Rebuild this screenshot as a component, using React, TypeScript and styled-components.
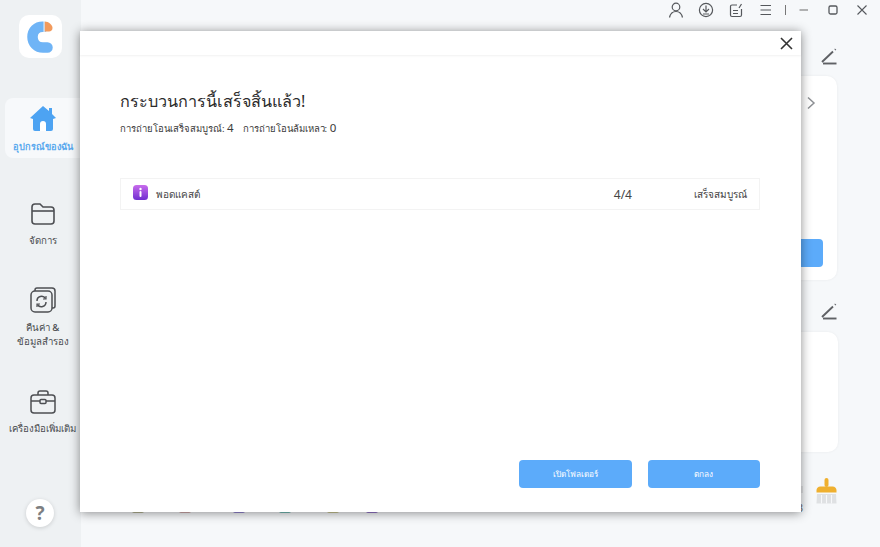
import React from 'react'
import styled, { createGlobalStyle } from 'styled-components'

const Global = createGlobalStyle`
  html, body { margin: 0; padding: 0; height: 100%; }
  body { font-family: "Noto Sans", "Liberation Sans", "DejaVu Sans", sans-serif; color: #333; overflow: hidden; }
  #root { height: 100%; }
`

const appDots = [
  { color: '#9a9a6a', gap: 0 },
  { color: '#c58b8b', gap: 47 },
  { color: '#6a55c0', gap: 54 },
  { color: '#3fa59a', gap: 46 },
  { color: '#b9b36a', gap: 48 },
  { color: '#6b3fb5', gap: 39 },
]

const App = () => {
  return (
    <Page>
      <Global />
      <Sidebar>
        <LogoTile>
          <svg width="32" height="34" viewBox="0 0 32 34">
            <path d="M18.5 6.8 C11.5 6.4 7.5 11 7.5 17 C7.5 23 12 27.5 18 27.5 H22.5" fill="none" stroke="#6fb4f6" strokeWidth="10.5" strokeLinecap="round" />
            <path d="M19.5 1.5 C24 1.5 27.5 5 27.5 8 C27.5 10 26 11.5 24 11.5 H19.5 Z" fill="#f29a5c" />
            <rect x="18.6" y="0" width="0.9" height="13" fill="#fff" />
          </svg>
        </LogoTile>
        <NavActive>
          <svg width="28" height="26" viewBox="0 0 28 26">
            <path d="M14 1 L1 13 L4 14 L4 24 A2 2 0 0 0 6 26 L22 26 A2 2 0 0 0 24 24 L24 14 L27 13 L23 9 L23 3 L20 3 L20 6 Z" fill="#4da3f2" />
            <path d="M11 26 L11 19 A3 3 0 0 1 17 19 L17 26 Z" fill="#fff" />
          </svg>
          <ActiveLabel>อุปกรณ์ของฉัน</ActiveLabel>
        </NavActive>
        <NavItem $top={44}>
          <svg width="26" height="24" viewBox="0 0 26 24" fill="none" stroke="#4d4f53" strokeWidth="1.6">
            <path d="M2 19 V5 A3 3 0 0 1 5 2 H10 L13 5 H21 A3 3 0 0 1 24 8 V19 A3 3 0 0 1 21 22 H5 A3 3 0 0 1 2 19 Z" />
            <path d="M2 9 H24" />
          </svg>
          <NavLabel>จัดการ</NavLabel>
        </NavItem>
        <NavItem $top={39}>
          <svg width="26" height="26" viewBox="0 0 26 26" fill="none" stroke="#4d4f53" strokeWidth="1.5">
            <rect x="1" y="4" width="21" height="21" rx="4" />
            <path d="M5 4 V3 A2 2 0 0 1 7 1 H22 A3 3 0 0 1 25 4 V19 A2 2 0 0 1 23 21 H22" />
            <path d="M7 14 A4.6 4.6 0 0 1 15.5 11.5 M16 15 A4.6 4.6 0 0 1 7.5 17.5" />
            <path d="M16 9 V12 H13 M7 20 V17 H10" strokeWidth="1.2" />
          </svg>
          <NavLabel>คืนค่า &<br />ข้อมูลสำรอง</NavLabel>
        </NavItem>
        <NavItem $top={41}>
          <svg width="26" height="24" viewBox="0 0 26 24" fill="none" stroke="#4d4f53" strokeWidth="1.5">
            <rect x="1" y="5" width="24" height="18" rx="3" />
            <path d="M8 5 V3 A2 2 0 0 1 10 1 H16 A2 2 0 0 1 18 3 V5" />
            <path d="M1 11 H10 M16 11 H25" />
            <rect x="10" y="9.5" width="6" height="4" rx="1" />
          </svg>
          <NavLabel>เครื่องมือเพิ่มเติม</NavLabel>
        </NavItem>
        <HelpButton>?</HelpButton>
      </Sidebar>

      <Main>
        <TitleBar>
          <BarIcon>
            <svg width="16" height="16" viewBox="0 0 16 16" fill="none" stroke="#55585c" strokeWidth="1.2">
              <circle cx="8" cy="5" r="3.8" />
              <path d="M1.5 15.5 C2.5 11 5 9.5 8 9.5 C11 9.5 13.5 11 14.5 15.5" />
            </svg>
          </BarIcon>
          <BarIcon>
            <svg width="16" height="16" viewBox="0 0 16 16" fill="none" stroke="#55585c" strokeWidth="1.2">
              <circle cx="8" cy="8" r="6.6" />
              <path d="M8 3.5 V9.5 M5 7 L8 10 L11 7 M5 12 H11" />
            </svg>
          </BarIcon>
          <BarIcon>
            <svg width="16" height="16" viewBox="0 0 16 16" fill="none" stroke="#55585c" strokeWidth="1.2">
              <path d="M9 3 H4 A1.5 1.5 0 0 0 2.5 4.5 V13 A1.5 1.5 0 0 0 4 14.5 H12 A1.5 1.5 0 0 0 13.5 13 V7" />
              <path d="M5 8.5 H10 M5 11.5 H10 M11 6 L13.5 2" />
            </svg>
          </BarIcon>
          <BarIcon>
            <svg width="16" height="16" viewBox="0 0 16 16" fill="none" stroke="#55585c" strokeWidth="1.2">
              <path d="M2.5 3.5 H13 M2.5 8 H13 M2.5 12.5 H13" />
            </svg>
          </BarIcon>
          <BarDivider />
          <WinIcon>
            <svg width="12" height="12" viewBox="0 0 12 12" fill="none" stroke="#777" strokeWidth="1.1">
              <path d="M1.5 6 H10" />
            </svg>
          </WinIcon>
          <WinIcon>
            <svg width="12" height="12" viewBox="0 0 12 12" fill="none" stroke="#55585c" strokeWidth="1.3">
              <rect x="2" y="2" width="8" height="8" rx="1.5" />
            </svg>
          </WinIcon>
          <WinIcon>
            <svg width="12" height="12" viewBox="0 0 12 12" fill="none" stroke="#55585c" strokeWidth="1.1">
              <path d="M1.5 1.5 L10.5 10.5 M10.5 1.5 L1.5 10.5" />
            </svg>
          </WinIcon>
        </TitleBar>

        <EditRow $top={28}><EditIcon /></EditRow>
        <UpperCard>
          <Chevron>
            <svg width="10" height="14" viewBox="0 0 10 14" fill="none" stroke="#8d9094" strokeWidth="1.5">
              <path d="M2 1.5 L8 7 L2 12.5" />
            </svg>
          </Chevron>
          <CardButton />
        </UpperCard>
        <EditRow $top={23}><EditIcon /></EditRow>
        <LowerCard />
        <BottomRow>
          <AppDots>
            {appDots.map((d) => (
              <AppDot key={d.color} $color={d.color} $gap={d.gap} />
            ))}
          </AppDots>
          <BottomRight>
            <StorageNote>
              <NoteBar />
              <span>3</span>
            </StorageNote>
            <svg width="21" height="26" viewBox="0 0 21 26">
              <rect x="8.5" y="0" width="4" height="9" rx="2" fill="#efb02f" />
              <path d="M0.5 13 A4 4 0 0 1 4.5 8.5 H16.5 A4 4 0 0 1 20.5 13 V14.5 H0.5 Z" fill="#efb02f" />
              <path d="M1 16 H20 L20.5 25.5 H0.5 Z" fill="#dfe1e3" />
              <path d="M5.5 17 V25.5 M10.5 17 V25.5 M15.5 17 V25.5" stroke="#f7f8fa" strokeWidth="1.1" />
            </svg>
          </BottomRight>
        </BottomRow>
      </Main>

      <Dialog>
        <DialogBar>
          <CloseButton>
            <svg width="13" height="13" viewBox="0 0 13 13" fill="none" stroke="#333" strokeWidth="1.6">
              <path d="M1 1 L12 12 M12 1 L1 12" />
            </svg>
          </CloseButton>
        </DialogBar>
        <DialogBody>
          <Title>กระบวนการนี้เสร็จสิ้นแล้ว!</Title>
          <Summary>
            <span>การถ่ายโอนเสร็จสมบูรณ์: <Num>4</Num></span>
            <span>การถ่ายโอนล้มเหลว: <Num>0</Num></span>
          </Summary>
          <ResultRow>
            <PodcastIcon>
              <svg width="15" height="15" viewBox="0 0 15 15">
                <defs>
                  <linearGradient id="pod" x1="0" y1="0" x2="0" y2="1">
                    <stop offset="0" stopColor="#c86bec" />
                    <stop offset="1" stopColor="#6f2fd0" />
                  </linearGradient>
                </defs>
                <rect width="15" height="15" rx="3.5" fill="url(#pod)" />
                <circle cx="7.5" cy="4" r="1.2" fill="#fff" />
                <rect x="6.5" y="6" width="2" height="6" rx="1" fill="#fff" />
              </svg>
            </PodcastIcon>
            <RowName>พอดแคสต์</RowName>
            <RowCount>4/4</RowCount>
            <RowStatus>เสร็จสมบูรณ์</RowStatus>
          </ResultRow>
          <DialogActions>
            <PrimaryButton>เปิดโฟลเดอร์</PrimaryButton>
            <PrimaryButton>ตกลง</PrimaryButton>
          </DialogActions>
        </DialogBody>
      </Dialog>
    </Page>
  )
}

const EditIcon = () => (
  <svg width="18" height="18" viewBox="0 0 18 18" fill="none" stroke="#5f6165" strokeWidth="1.9">
    <path d="M2 14 L13 3.5 M15 1.8 L15.6 1.2" />
    <path d="M3 15.5 H16.5" />
  </svg>
)

export default App

const Page = styled.div`
  position: relative;
  display: flex;
  width: 880px;
  height: 547px;
  overflow: hidden;
  background: #f6f8fa;
`

const Sidebar = styled.nav`
  display: flex;
  flex-direction: column;
  align-items: flex-end;
  width: 81px;
  flex-shrink: 0;
  padding-top: 15px;
  box-sizing: border-box;
  background: #eef1f3;
`

const LogoTile = styled.div`
  display: flex;
  align-items: center;
  justify-content: center;
  width: 43px;
  height: 43px;
  margin-right: 19px;
  border-radius: 10px;
  background: #fff;
`

const NavActive = styled.div`
  display: flex;
  flex-direction: column;
  align-items: center;
  width: 76px;
  height: 60px;
  margin-top: 40px;
  padding-top: 7px;
  box-sizing: border-box;
  border-radius: 8px 0 0 8px;
  background: #f7f9fb;
`

const ActiveLabel = styled.span`
  margin-top: 9px;
  font-size: 9.2px;
  font-weight: 700;
  line-height: 13px;
  color: #5aa9ee;
  white-space: nowrap;
`

const NavItem = styled.div<{ $top: number }>`
  display: flex;
  flex-direction: column;
  align-items: center;
  width: 81px;
  margin-top: ${(p) => p.$top}px;
  padding-left: 4px;
  box-sizing: border-box;
`

const NavLabel = styled.span`
  margin-top: 8px;
  font-size: 9.7px;
  font-weight: 500;
  line-height: 14px;
  color: #4a4c50;
  text-align: center;
  white-space: nowrap;
`

const HelpButton = styled.div`
  display: flex;
  align-items: center;
  justify-content: center;
  width: 28px;
  height: 28px;
  margin-top: 63px;
  margin-right: 27px;
  border-radius: 50%;
  background: #fff;
  box-shadow: 0 1px 4px rgba(0, 0, 0, 0.15);
  font-size: 19px;
  font-weight: 700;
  color: #7d7f82;
`

const Main = styled.main`
  display: flex;
  flex-direction: column;
  flex: 1;
  min-width: 0;
`

const TitleBar = styled.header`
  display: flex;
  align-items: center;
  justify-content: flex-end;
  height: 20px;
  padding-right: 4px;
`

const BarIcon = styled.span`
  display: flex;
  justify-content: center;
  width: 30px;
`

const BarDivider = styled.span`
  width: 1px;
  height: 10px;
  margin: 0 3px 0 4px;
  background: #777;
`

const WinIcon = styled.span`
  display: flex;
  justify-content: center;
  width: 29px;
`

const EditRow = styled.div<{ $top: number }>`
  display: flex;
  justify-content: flex-end;
  height: 18px;
  margin-top: ${(p) => p.$top}px;
  padding-right: 42px;
`

const UpperCard = styled.section`
  display: flex;
  flex-direction: column;
  align-items: flex-end;
  height: 204px;
  margin: 10px 43px 0 30px;
  padding: 20px 14px 13px 0;
  box-sizing: border-box;
  border-radius: 10px;
  background: #fff;
  box-shadow: 0 0 3px rgba(0, 0, 0, 0.06);
`

const Chevron = styled.span`
  display: flex;
  margin-right: 7px;
`

const CardButton = styled.span`
  width: 120px;
  height: 28px;
  margin-top: auto;
  border-radius: 4px;
  background: #5cabfa;
`

const LowerCard = styled.section`
  height: 120px;
  margin: 11px 42px 0 30px;
  border-radius: 10px;
  background: #fff;
  box-shadow: 0 0 3px rgba(0, 0, 0, 0.06);
`

const BottomRow = styled.div`
  display: flex;
  align-items: flex-start;
  justify-content: space-between;
  margin: 26px 43px 0 51px;
`

const AppDots = styled.div`
  display: flex;
  margin-top: 5px;
`

const AppDot = styled.span<{ $color: string; $gap: number }>`
  width: 12px;
  height: 30px;
  margin-left: ${(p) => (p.$gap ? p.$gap - 12 : 0)}px;
  border-radius: 2px;
  background: ${(p) => p.$color};
  opacity: 0.7;
`

const BottomRight = styled.div`
  display: flex;
  align-items: flex-start;
  gap: 13px;
`

const StorageNote = styled.div`
  display: flex;
  flex-direction: column;
  align-items: flex-end;
  font-size: 10px;
  line-height: 12px;
  color: #555;
`

const NoteBar = styled.span`
  width: 6px;
  height: 7px;
  margin: 8px 0 9px;
  background: #e2e4e6;
`

const Dialog = styled.section`
  position: absolute;
  left: 80px;
  top: 31px;
  display: flex;
  flex-direction: column;
  width: 721px;
  height: 481px;
  background: #fff;
  box-shadow: 0 1px 10px rgba(0, 0, 0, 0.45);
`

const DialogBar = styled.div`
  display: flex;
  align-items: center;
  justify-content: flex-end;
  height: 24px;
  padding-right: 8px;
  box-shadow: 0 1px 2px rgba(0, 0, 0, 0.06);
`

const CloseButton = styled.span`
  display: flex;
`

const DialogBody = styled.div`
  display: flex;
  flex-direction: column;
  flex: 1;
  padding: 32px 41px 24px 40px;
`

const Title = styled.h1`
  margin: 0;
  font-size: 16.2px;
  font-weight: 400;
  line-height: 28px;
  color: #2b2b2b;
`

const Summary = styled.p`
  display: flex;
  gap: 9px;
  margin: 5px 0 0;
  font-size: 9.5px;
  line-height: 16px;
  color: #3a3a3a;
`

const Num = styled.span`
  font-size: 11.5px;
`

const ResultRow = styled.div`
  display: flex;
  align-items: center;
  height: 32px;
  margin-top: 41px;
  padding: 0 12px;
  box-sizing: border-box;
  border: 1px solid #f3f3f3;
  font-size: 10px;
  color: #444;
`

const PodcastIcon = styled.span`
  display: flex;
  margin-bottom: 3px;
`

const RowName = styled.span`
  flex: 1;
  margin-left: 8px;
`

const RowCount = styled.span`
  margin-right: 62px;
  font-size: 12px;
`

const RowStatus = styled.span`
  white-space: nowrap;
`

const DialogActions = styled.div`
  display: flex;
  justify-content: flex-end;
  gap: 16px;
  margin-top: auto;
`

const PrimaryButton = styled.button`
  width: 112.5px;
  height: 28px;
  padding: 0;
  border: 0;
  border-radius: 4px;
  background: #5cabfa;
  font-family: inherit;
  font-size: 8.2px;
  color: #fff;
`
